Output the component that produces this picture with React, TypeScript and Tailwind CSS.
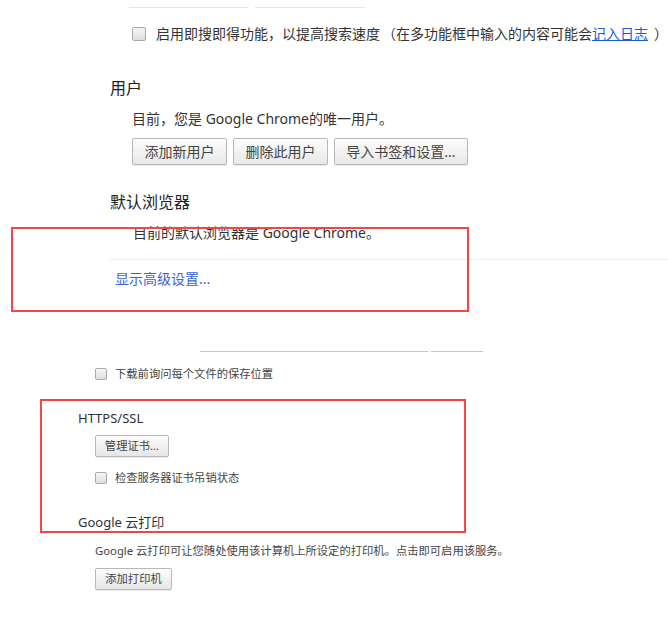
import React from "react";

const font = { fontFamily: '"Noto Sans", "Noto Sans CJK SC", sans-serif' };

function TopButton({ w, children }: { w: string; children: React.ReactNode }) {
  return (
    <div
      className={`${w} h-[27px] flex items-center justify-center rounded-[2px] border border-[#b8b8b8] bg-gradient-to-b from-[#fdfdfd] to-[#e8e8e8] shadow-[0_1px_0_rgba(0,0,0,0.08)] text-[14px] text-[#444] leading-none`}
    >
      {children}
    </div>
  );
}

function SmallButton({ w, children }: { w: string; children: React.ReactNode }) {
  return (
    <div
      className={`${w} h-[22px] flex items-center justify-center rounded-[2px] border border-[#b8b8b8] bg-gradient-to-b from-[#fdfdfd] to-[#e6e6e6] shadow-[0_1px_0_rgba(0,0,0,0.08)] text-[11.3px] text-[#444] leading-none`}
    >
      {children}
    </div>
  );
}

export default function App() {
  return (
    <div className="relative w-[668px] h-[631px] overflow-hidden bg-white text-[#333]" style={font}>
      {/* Top section */}
      <div className="flex flex-col">
        <div className="flex h-[8px]">
          <div className="ml-[129px] w-[119px] h-[8px] border-b border-[#e6e6e6]" />
          <div className="ml-[7px] w-[110px] h-[8px] border-b border-[#e6e6e6]" />
        </div>
        <div className="mt-[19px] flex items-center h-[14px] pl-[132px]">
          <div className="w-[14px] h-[14px] rounded-[2px] border border-[#a8a8a8] bg-gradient-to-b from-[#f6f6f6] to-[#dedede] shrink-0" />
          <span className="ml-[10px] text-[14px] leading-[14px] whitespace-nowrap text-[#333]">
            启用即搜即得功能，以提高搜索速度
            <span className="inline-block w-[16px] text-right">（</span>
            在多功能框中输入的内容可能会
            <span className="text-[#1a5fd6] underline">记入日志</span>
            <span className="inline-block w-[14px] pl-[6px]">）</span>
          </span>
        </div>
        <div className="mt-[37px] pl-[110px] text-[16px] leading-[20px] text-[#222]">用户</div>
        <div className="mt-[11px] pl-[132px] text-[14px] leading-[20px]">目前，您是 Google Chrome的唯一用户。</div>
        <div className="mt-[9px] pl-[132px] flex gap-[6px]">
          <TopButton w="w-[95px]">添加新用户</TopButton>
          <TopButton w="w-[95px]">删除此用户</TopButton>
          <TopButton w="w-[134px]">导入书签和设置...</TopButton>
        </div>
        <div className="mt-[27px] pl-[110px] text-[16px] leading-[20px] text-[#222]">默认浏览器</div>
        <div className="mt-[11px] pl-[133px] text-[14px] leading-[20px]">目前的默认浏览器是 Google Chrome。</div>
        <div className="mt-[16px] ml-[110px] h-[1px] bg-[#ececec]" />
        <div className="mt-[9px] pl-[115px] text-[14px] leading-[20px] text-[#3b63d9]">显示高级设置...</div>
      </div>

      {/* Bottom section */}
      <div className="flex flex-col text-[#444]">
        <div className="mt-[52px] flex h-[11px]">
          <div className="ml-[200px] w-[228px] h-[11px] border-b border-[#c4c4c4]" />
          <div className="ml-[3px] w-[52px] h-[11px] border-b border-[#c4c4c4]" />
        </div>
        <div className="mt-[16px] flex items-center h-[12px] pl-[95px]">
          <div className="w-[12px] h-[12px] rounded-[2px] border border-[#aaa] bg-gradient-to-b from-[#f6f6f6] to-[#dedede] shrink-0" />
          <span className="ml-[8px] text-[11.3px] leading-[12px] whitespace-nowrap">下载前询问每个文件的保存位置</span>
        </div>
        <div className="mt-[30px] pl-[78px] text-[13px] leading-[16px] text-[#333]">HTTPS/SSL</div>
        <div className="mt-[9px] pl-[95px]">
          <SmallButton w="w-[74px]">管理证书...</SmallButton>
        </div>
        <div className="mt-[15px] flex items-center h-[12px] pl-[95px]">
          <div className="w-[12px] h-[12px] rounded-[2px] border border-[#aaa] bg-gradient-to-b from-[#f6f6f6] to-[#dedede] shrink-0" />
          <span className="ml-[8px] text-[11.3px] leading-[12px] whitespace-nowrap">检查服务器证书吊销状态</span>
        </div>
        <div className="mt-[30px] pl-[78px] text-[13px] leading-[16px] text-[#333]">Google 云打印</div>
        <div className="mt-[13px] pl-[95px] text-[11.3px] leading-[16px] whitespace-nowrap">
          Google 云打印可让您随处使用该计算机上所设定的打印机。点击即可启用该服务。
        </div>
        <div className="mt-[9px] pl-[95px]">
          <SmallButton w="w-[77px]">添加打印机</SmallButton>
        </div>
      </div>

      {/* Annotation boxes */}
      <div className="absolute left-[11px] top-[227px] w-[458px] h-[85px] border-2 border-[#f24545] pointer-events-none" />
      <div className="absolute left-[40px] top-[399px] w-[426px] h-[134px] border-2 border-[#f24545] pointer-events-none" />
    </div>
  );
}
